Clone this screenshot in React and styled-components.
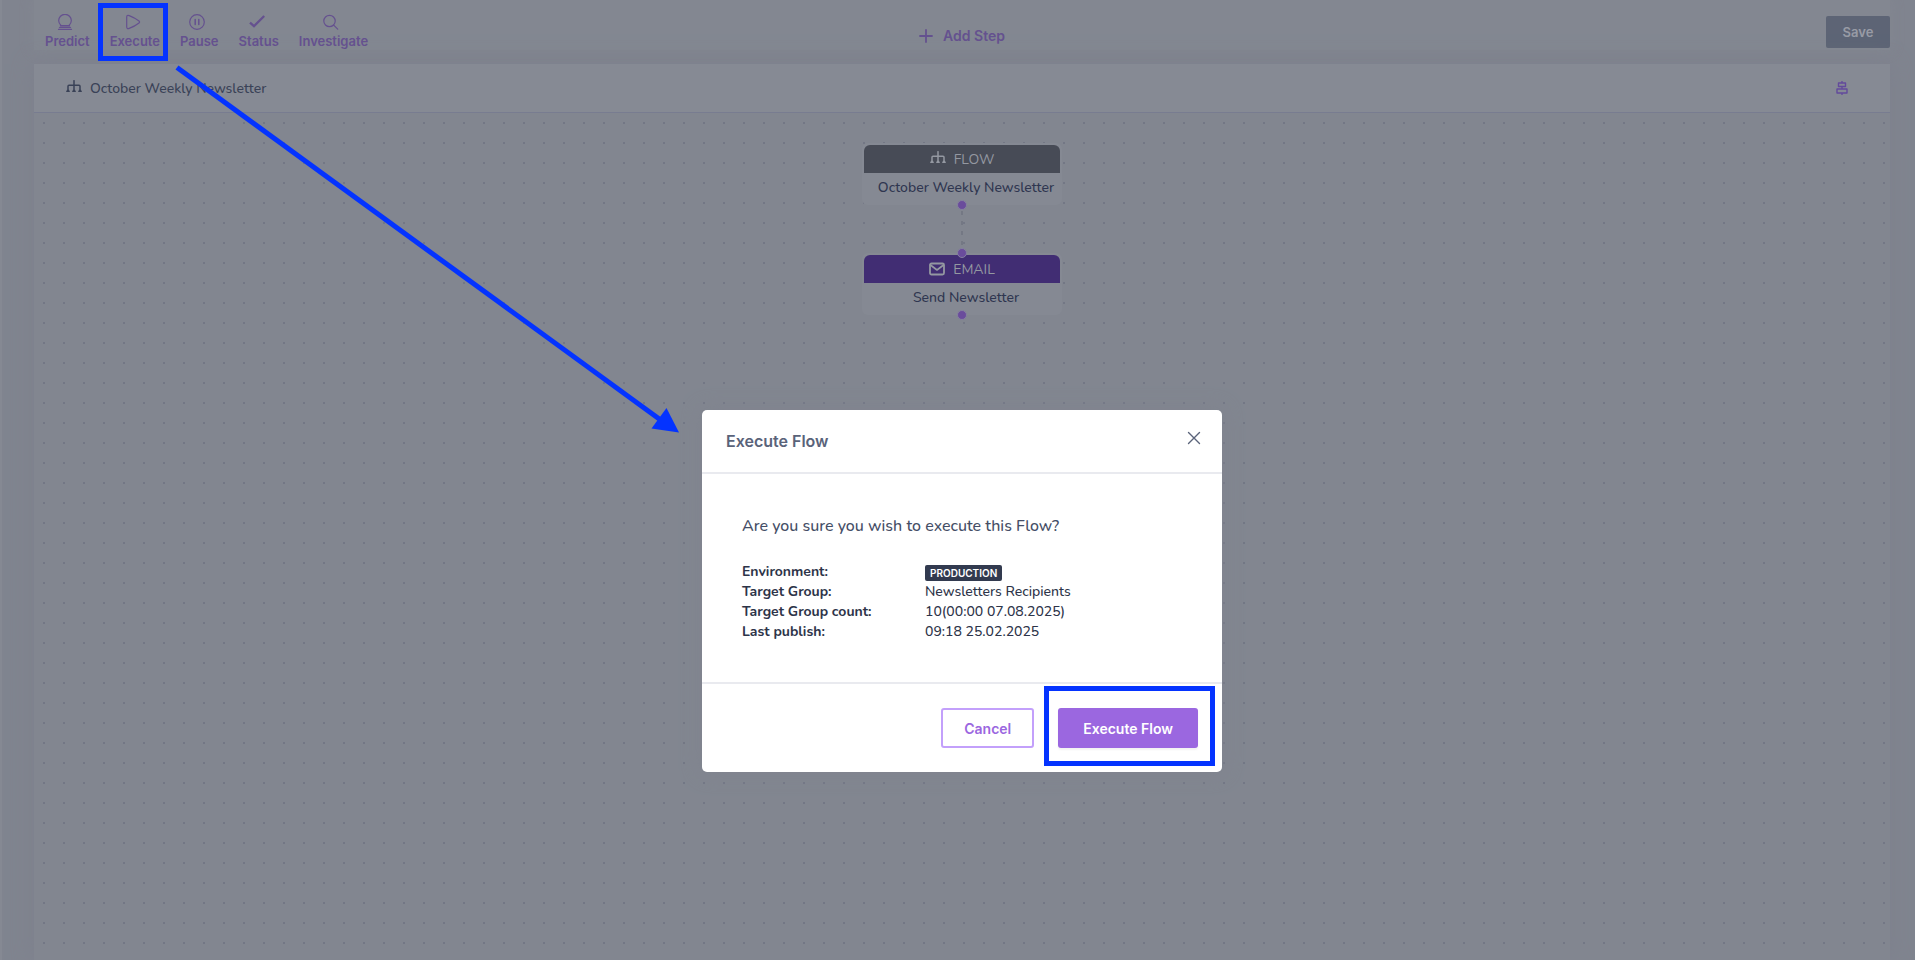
import styled, { createGlobalStyle } from "styled-components";

const GlobalStyle = createGlobalStyle`
  * {
    box-sizing: border-box;
  }

  body {
    margin: 0;
    background: #80848f;
    color: #3a4257;
    font-family: "Nunito", "Lato", sans-serif;
    font-size: 14px;
    font-weight: 500;
  }

  button {
    margin: 0;
    padding: 0;
    border: none;
    background: none;
    cursor: pointer;
    font-family: "Metropolis", "Inter", sans-serif;
    font-weight: 600;
  }
`;

const Page = styled.div`
  position: relative;
  display: flex;
  min-height: 100vh;
  overflow: hidden;
`;

const Sidebar = styled.div`
  width: 2px;
  background: #858993;
`;

const Workspace = styled.main`
  flex: 1;
  display: flex;
  flex-direction: column;
  padding: 0 25px 0 32px;
`;

const Toolbar = styled.header`
  display: grid;
  grid-template-columns: 1fr auto 1fr;
  align-items: start;
  height: 50px;
  margin-bottom: 14px;
  background: #838791;
  box-shadow: 0 0 12px #838791;
`;

const Actions = styled.div`
  display: flex;
  gap: 20px;
  padding: 14px 0 0 11px;
`;

const ActionButton = styled.button`
  position: relative;
  display: flex;
  flex-direction: column;
  align-items: center;
  gap: 3px;
  color: #65518f;
  font-size: 13px;
  line-height: 16px;

  svg {
    margin-right: 4px;
  }
`;

const AddStepButton = styled.button`
  display: flex;
  align-items: center;
  gap: 10px;
  padding-top: 26px;
  color: #65518f;
  font-size: 14px;
  line-height: 20px;
`;

const SaveButton = styled.button`
  justify-self: end;
  width: 64px;
  height: 32px;
  margin-top: 16px;
  border-radius: 2px;
  background: #5d6475;
  color: #989ba5;
  font-size: 13px;
`;

const Panel = styled.section`
  flex: 1;
  display: flex;
  flex-direction: column;
  box-shadow: 0 0 20px #7d818d;
`;

const PanelHeader = styled.div`
  display: flex;
  align-items: center;
  justify-content: space-between;
  height: 49px;
  padding: 0 42px 0 32px;
  border-bottom: 1px solid #787c90;
  background: #868a94;
`;

const FlowName = styled.h1`
  display: flex;
  align-items: center;
  gap: 8px;
  margin: 0;
  font-size: 14px;
  font-weight: 500;
`;

const AlignButton = styled.button`
  display: flex;
  color: #634a9c;
`;

const Canvas = styled.div`
  flex: 1;
  display: flex;
  flex-direction: column;
  align-items: center;
  padding-top: 30px;
  background-color: #828690;
  background-image: conic-gradient(from 90deg at 18px 18px, #737785 90deg, transparent 0);
  background-size: 20px 20px;
  background-position: -9px -9px;
`;

const Node = styled.article`
  position: relative;
  width: 200px;
  padding: 2px 2px 0;
  border-radius: 6px;
  background: #858993;
`;

const NodeHead = styled.div`
  display: flex;
  align-items: center;
  justify-content: center;
  gap: 8px;
  height: 28px;
  border-radius: 6px 6px 0 0;
  background: ${(props) => props.$color};
  color: #9498a1;
  font-weight: 400;
`;

const NodeBody = styled.div`
  height: 32px;
  padding-left: 8px;
  color: #2f3650;
  line-height: 30px;
  text-align: center;
  white-space: nowrap;
`;

const Port = styled.span`
  position: absolute;
  left: 50%;
  ${(props) => (props.$side === "top" ? "top: -5px;" : "bottom: -5px;")}
  width: 10px;
  height: 10px;
  margin-left: -5px;
  border: 1px solid #85809f;
  border-radius: 50%;
  background: #6a4c9c;
`;

const Connector = styled.div`
  width: 2px;
  height: 48px;
  background: repeating-linear-gradient(transparent 0 6px, #747884 6px 10px);
`;

const Highlight = styled.span`
  position: absolute;
  inset: ${(props) => props.$inset};
  border: 5px solid #0433ff;
  pointer-events: none;
`;

const Arrow = styled.svg`
  position: absolute;
  top: 60px;
  left: 170px;
  z-index: 2;
  pointer-events: none;
`;

const Overlay = styled.div`
  position: absolute;
  inset: 0;
  z-index: 1;
  display: flex;
  align-items: flex-start;
  justify-content: center;
  padding: 410px 0 0 9px;
`;

const Modal = styled.section`
  width: 520px;
  border-radius: 5px;
  background: #fff;
  box-shadow: 0 0 20px #7f838e;
`;

const ModalHeader = styled.header`
  display: flex;
  align-items: center;
  justify-content: space-between;
  height: 64px;
  padding: 0 18px 0 24px;
  border-bottom: 2px solid #e9eaef;
`;

const ModalTitle = styled.h2`
  margin: 0;
  color: #5a637a;
  font-family: "Metropolis", "Inter", sans-serif;
  font-size: 16px;
  font-weight: 600;
`;

const CloseButton = styled.button`
  display: flex;
  padding: 2px;
  margin-bottom: 6px;
  color: #5a637a;
`;

const ModalBody = styled.div`
  padding: 40px;
`;

const Question = styled.p`
  margin: 0 0 24px;
  color: #454e66;
  font-size: 16px;
  line-height: 24px;
`;

const Details = styled.dl`
  display: grid;
  grid-template-columns: 183px 1fr;
  margin: 0;
  color: #2d3449;
  line-height: 20px;

  dt {
    font-weight: 700;
  }

  dd {
    margin: 0;
  }
`;

const Badge = styled.span`
  display: block;
  width: fit-content;
  margin-top: 3px;
  padding: 0 5px;
  border-radius: 2px;
  background: #323a4f;
  color: #fff;
  font-family: "Metropolis", "Inter", sans-serif;
  font-size: 10px;
  font-weight: 600;
  line-height: 16px;
`;

const ModalFooter = styled.footer`
  display: flex;
  justify-content: flex-end;
  gap: 24px;
  padding: 24px;
  border-top: 2px solid #e9eaef;
`;

const CancelButton = styled.button`
  height: 40px;
  padding: 0 21px;
  border: 2px solid #c3a0fb;
  border-radius: 3px;
  color: #9b67e0;
  font-size: 14px;
`;

const ExecuteButton = styled.button`
  position: relative;
  height: 40px;
  padding: 0 25px;
  border-radius: 3px;
  background: #9b67e0;
  box-shadow: 0 2px 2px #0000000d;
  color: #fff;
  font-size: 14px;
`;

const Icon = ({ size = 16, height = size, children }) => (
  <svg
    width={size}
    height={height}
    viewBox={`0 0 ${size} ${height}`}
    fill="none"
    stroke="currentColor"
    strokeWidth="1.2"
    strokeLinecap="round"
    strokeLinejoin="round"
    aria-hidden="true"
  >
    {children}
  </svg>
);

const FlowIcon = () => (
  <Icon>
    <path d="M8 .7V11M2 11V6.200q0-1 1-1h10q1 0 1 1V11" strokeWidth="1.5" />
    <path d="M1 9.800h2l1 2.200H0zM7 9.800h2l1 2.200H6zM13 9.800h2l1 2.200h-4z" fill="currentColor" stroke="none" />
  </Icon>
);

const actions = [
  {
    label: "Predict",
    icon: (
      <>
        <path d="M3.800 11.300A6.300 6.300 0 1 1 12.200 11.300" />
        <path d="M3.500 11.600h9M2.500 13.500h11M1.500 15.300h13" />
        <path d="M3.200 12.300h9.600" strokeWidth=".6" />
      </>
    ),
  },
  {
    label: "Execute",
    highlighted: true,
    icon: <path d="M1.700 3.200q0-2.600 2.500-1.600Q10 3.800 14 7q1.200 1 0 2-4 3.200-9.800 5.400-2.500 1-2.500-1.600z" />,
  },
  {
    label: "Pause",
    icon: (
      <>
        <circle cx="8" cy="8" r="7.3" />
        <path d="M6.200 5.400v5.200M9.800 5.400v5.200" strokeWidth="1.5" />
      </>
    ),
  },
  {
    label: "Status",
    icon: <path d="M1 8.600l4 3.600L15.200 2" strokeWidth="2.300" strokeLinecap="butt" strokeLinejoin="miter" />,
  },
  {
    label: "Investigate",
    icon: (
      <>
        <circle cx="6.500" cy="7" r="5.700" />
        <path d="M10.700 11.200l4 4" />
      </>
    ),
  },
];

export default function App() {
  return (
    <>
      <GlobalStyle />
      <Page>
        <Sidebar />
        <Workspace>
          <Toolbar>
            <Actions>
              {actions.map(({ label, icon, highlighted }) => (
                <ActionButton key={label}>
                  <Icon>{icon}</Icon>
                  {label}
                  {highlighted && <Highlight $inset="-11px -8px -12px -12px" />}
                </ActionButton>
              ))}
            </Actions>
            <AddStepButton>
              <Icon size={14}>
                <path d="M7 1v12M1 7h12" strokeWidth="1.8" />
              </Icon>
              Add Step
            </AddStepButton>
            <SaveButton>Save</SaveButton>
          </Toolbar>

          <Panel>
            <PanelHeader>
              <FlowName>
                <FlowIcon />
                October Weekly Newsletter
              </FlowName>
              <AlignButton aria-label="Align steps">
                <Icon size={12} height={14}>
                  <path
                    d="M6 .5v1.500M6 5.500v2.500M6 12v1.500M2.500 2h7v3.500h-7zM1 8h10v4H1z"
                    strokeWidth="1.400"
                  />
                </Icon>
              </AlignButton>
            </PanelHeader>
            <Canvas>
              <Node>
                <NodeHead $color="#474b56">
                  <FlowIcon />
                  FLOW
                </NodeHead>
                <NodeBody>October Weekly Newsletter</NodeBody>
                <Port />
              </Node>
              <Connector />
              <Node>
                <Port $side="top" />
                <NodeHead $color="#412d73">
                  <Icon>
                    <rect x="1" y="2.500" width="14" height="11" rx="1.500" strokeWidth="1.800" />
                    <path d="M1.500 4l6.500 5 6.500-5" strokeWidth="1.600" />
                  </Icon>
                  EMAIL
                </NodeHead>
                <NodeBody>Send Newsletter</NodeBody>
                <Port />
              </Node>
            </Canvas>
          </Panel>
        </Workspace>

        <Overlay>
          <Modal role="dialog" aria-modal="true" aria-labelledby="execute-title">
            <ModalHeader>
              <ModalTitle id="execute-title">Execute Flow</ModalTitle>
              <CloseButton aria-label="Close">
                <Icon>
                  <path d="M2.500 2.500l11 11M13.500 2.500l-11 11" strokeWidth="1.400" />
                </Icon>
              </CloseButton>
            </ModalHeader>
            <ModalBody>
              <Question>Are you sure you wish to execute this Flow?</Question>
              <Details>
                <dt>Environment:</dt>
                <dd>
                  <Badge>PRODUCTION</Badge>
                </dd>
                <dt>Target Group:</dt>
                <dd>Newsletters Recipients</dd>
                <dt>Target Group count:</dt>
                <dd>10(00:00 07.08.2025)</dd>
                <dt>Last publish:</dt>
                <dd>09:18 25.02.2025</dd>
              </Details>
            </ModalBody>
            <ModalFooter>
              <CancelButton>Cancel</CancelButton>
              <ExecuteButton>
                Execute Flow
                <Highlight $inset="-22px -17px -18px -14px" />
              </ExecuteButton>
            </ModalFooter>
          </Modal>
        </Overlay>

        <Arrow width="520" height="380" viewBox="170 60 520 380" aria-hidden="true">
          <path d="M177 67.500L662 421" stroke="#0433ff" strokeWidth="5" />
          <path d="M679 432.600L666.500 408L651.500 428.500Z" fill="#0433ff" />
        </Arrow>
      </Page>
    </>
  );
}
